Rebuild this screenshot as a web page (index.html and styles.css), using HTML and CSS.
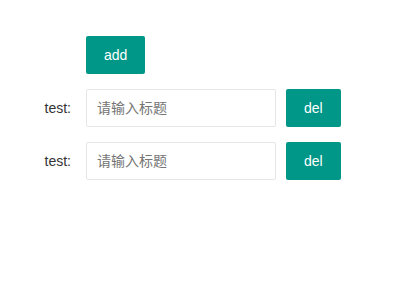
FILE: index.html
```html
<!DOCTYPE html>
<html>
  <head>
    <title>Form</title>
    <link rel="stylesheet" href="styles.css">
  </head>
  <body>
    <div class="form">
      <div class="form-item">
        <div class="form-label"></div>
        <button class="btn">add</button>
      </div>
      <div class="form-item">
        <label class="form-label">test:</label>
        <input class="form-input" type="text" placeholder="请输入标题">
        <button class="btn btn-del">del</button>
      </div>
      <div class="form-item">
        <label class="form-label">test:</label>
        <input class="form-input" type="text" placeholder="请输入标题">
        <button class="btn btn-del">del</button>
      </div>
    </div>
  </body>
</html>
```

FILE: styles.css
```css
body {
  margin: 0;
  background: #fff;
  font-family: "Liberation Sans", Arial, "Noto Sans CJK SC", sans-serif;
  font-size: 14px;
  color: #333;
}

.form {
  padding-top: 36px;
}

.form-item {
  display: flex;
  align-items: center;
  margin-bottom: 15px;
  height: 38px;
}

.form-label {
  width: 86px;
  box-sizing: border-box;
  padding-right: 15px;
  text-align: right;
  color: #333;
}

.form-input {
  width: 190px;
  height: 38px;
  box-sizing: border-box;
  border: 1px solid #e6e6e6;
  border-radius: 2px;
  padding: 0 10px;
  font-family: "Liberation Sans", Arial, "Noto Sans CJK SC", sans-serif;
  font-size: 14px;
  color: #333;
  outline: none;
}

.form-input::placeholder {
  color: #757575;
}

.btn {
  height: 38px;
  padding: 0 18px;
  border: none;
  border-radius: 2px;
  background-color: #009688;
  color: #fff;
  font-family: "Liberation Sans", Arial, sans-serif;
  font-size: 14px;
  cursor: pointer;
}

.btn-del {
  margin-left: 10px;
}
```
